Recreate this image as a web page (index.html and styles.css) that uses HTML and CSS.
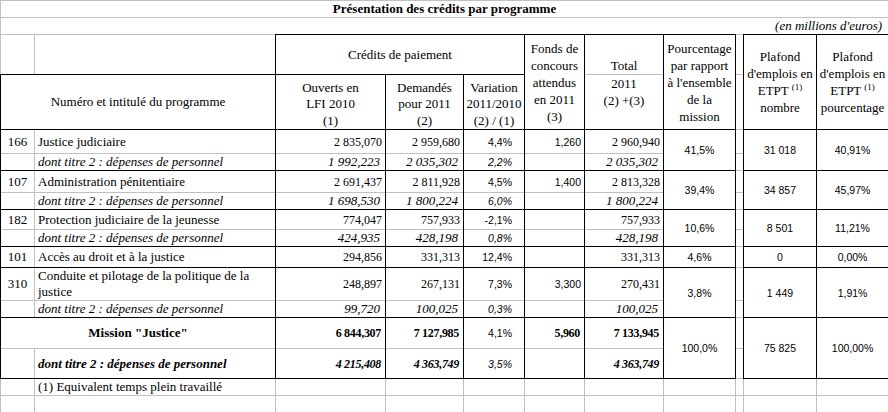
FILE: index.html
```html
<!DOCTYPE html>
<html lang="fr">
<head>
<meta charset="utf-8">
<title>Présentation des crédits par programme</title>
<link rel="stylesheet" href="styles.css">
</head>
<body>
<table class="sheet">
<colgroup>
<col class="c-a"><col class="c-b"><col class="c-c"><col class="c-d"><col class="c-e"><col class="c-f"><col class="c-g"><col class="c-h"><col class="c-i"><col class="c-j"><col class="c-k">
</colgroup>
<tr class="h17"><td colspan="11" class="title">Présentation des crédits par programme</td></tr>
<tr class="h17"><td colspan="11" class="unit">(en millions d'euros)</td></tr>
<tr class="h40">
 <td></td><td></td>
 <td colspan="3" class="k ctr">Crédits de paiement</td>
 <td rowspan="2" class="k ctr hd">Fonds de<br>concours<br>attendus<br>en 2011<br>(3)</td>
 <td class="kl kr kt ctr bot hd">Total</td>
 <td rowspan="2" class="k ctr hd">Pourcentage<br>par rapport<br>à l'ensemble<br>de la<br>mission</td>
 <td class="gap"></td>
 <td rowspan="2" class="k ctr hd">Plafond<br>d'emplois en<br>ETPT <sup>(1)</sup><br>nombre</td>
 <td rowspan="2" class="k ctr hd">Plafond<br>d'emplois en<br>ETPT <sup>(1)</sup><br>pourcentage</td>
</tr>
<tr class="h55">
 <td colspan="2" class="k ctr">Numéro et intitulé du programme</td>
 <td class="k ctr bot sub">Ouverts en<br>LFI 2010<br>(1)</td>
 <td class="k ctr bot sub">Demandés<br>pour 2011<br>(2)</td>
 <td class="k ctr bot sub">Variation<br>2011/2010<br>(2) / (1)</td>
 <td class="kl kr kb ctr top hd">2011<br>(2) +(3)</td>
 <td class="gap"></td>
</tr>

<tr class="h24">
 <td class="kl kt ctr">166</td>
 <td class="kt kr">Justice judiciaire</td>
 <td class="kl kr kt num">2 835,070</td>
 <td class="kl kr kt num">2 959,680</td>
 <td class="kl kr kt pct">4,4%</td>
 <td class="kl kr kt snum">1,260</td>
 <td class="kl kr kt num">2 960,940</td>
 <td rowspan="2" class="k ctr sans">41,5%</td>
 <td class="gap"></td>
 <td rowspan="2" class="k ctr sans">31 018</td>
 <td rowspan="2" class="k ctr sans">40,91%</td>
</tr>
<tr class="h17">
 <td class="kl kb"></td>
 <td class="kr kb it">dont titre 2 : dépenses de personnel</td>
 <td class="kl kr kb inum">1 992,223</td>
 <td class="kl kr kb inum">2 035,302</td>
 <td class="kl kr kb pct it">2,2%</td>
 <td class="kl kr kb"></td>
 <td class="kl kr kb inum">2 035,302</td>
 <td class="gap"></td>
</tr>

<tr class="h22">
 <td class="kl kt ctr">107</td>
 <td class="kt kr">Administration pénitentiaire</td>
 <td class="kl kr kt num">2 691,437</td>
 <td class="kl kr kt num">2 811,928</td>
 <td class="kl kr kt pct">4,5%</td>
 <td class="kl kr kt snum">1,400</td>
 <td class="kl kr kt num">2 813,328</td>
 <td rowspan="2" class="k ctr sans">39,4%</td>
 <td class="gap"></td>
 <td rowspan="2" class="k ctr sans">34 857</td>
 <td rowspan="2" class="k ctr sans">45,97%</td>
</tr>
<tr class="h17">
 <td class="kl kb"></td>
 <td class="kr kb it">dont titre 2 : dépenses de personnel</td>
 <td class="kl kr kb inum">1 698,530</td>
 <td class="kl kr kb inum">1 800,224</td>
 <td class="kl kr kb pct it">6,0%</td>
 <td class="kl kr kb"></td>
 <td class="kl kr kb inum">1 800,224</td>
 <td class="gap"></td>
</tr>

<tr class="h20">
 <td class="kl kt ctr">182</td>
 <td class="kt kr">Protection judiciaire de la jeunesse</td>
 <td class="kl kr kt num">774,047</td>
 <td class="kl kr kt num">757,933</td>
 <td class="kl kr kt pct">-2,1%</td>
 <td class="kl kr kt"></td>
 <td class="kl kr kt num">757,933</td>
 <td rowspan="2" class="k ctr sans">10,6%</td>
 <td class="gap"></td>
 <td rowspan="2" class="k ctr sans">8 501</td>
 <td rowspan="2" class="k ctr sans">11,21%</td>
</tr>
<tr class="h17">
 <td class="kl kb"></td>
 <td class="kr kb it">dont titre 2 : dépenses de personnel</td>
 <td class="kl kr kb inum">424,935</td>
 <td class="kl kr kb inum">428,198</td>
 <td class="kl kr kb pct it">0,8%</td>
 <td class="kl kr kb"></td>
 <td class="kl kr kb inum">428,198</td>
 <td class="gap"></td>
</tr>

<tr class="h21">
 <td class="kl kt kb ctr">101</td>
 <td class="kt kr kb">Accès au droit et à la justice</td>
 <td class="k num">294,856</td>
 <td class="k num">331,313</td>
 <td class="k pct">12,4%</td>
 <td class="k"></td>
 <td class="k num">331,313</td>
 <td class="k ctr sans">4,6%</td>
 <td class="gap"></td>
 <td class="k ctr sans">0</td>
 <td class="k ctr sans">0,00%</td>
</tr>

<tr class="h32">
 <td class="kl kt ctr">310</td>
 <td class="kt kr wrap">Conduite et pilotage de la politique de la<br>justice</td>
 <td class="kl kr kt num">248,897</td>
 <td class="kl kr kt num">267,131</td>
 <td class="kl kr kt pct">7,3%</td>
 <td class="kl kr kt snum">3,300</td>
 <td class="kl kr kt num">270,431</td>
 <td rowspan="2" class="k ctr sans">3,8%</td>
 <td class="gap"></td>
 <td rowspan="2" class="k ctr sans">1 449</td>
 <td rowspan="2" class="k ctr sans">1,91%</td>
</tr>
<tr class="h17">
 <td class="kl kb"></td>
 <td class="kr kb it">dont titre 2 : dépenses de personnel</td>
 <td class="kl kr kb inum">99,720</td>
 <td class="kl kr kb inum">100,025</td>
 <td class="kl kr kb pct it">0,3%</td>
 <td class="kl kr kb"></td>
 <td class="kl kr kb inum">100,025</td>
 <td class="gap"></td>
</tr>

<tr class="h31">
 <td colspan="2" class="kl kt kr ctr strong">Mission "Justice"</td>
 <td class="kl kr kt bnum">6 844,307</td>
 <td class="kl kr kt bnum">7 127,985</td>
 <td class="kl kr kt pct">4,1%</td>
 <td class="kl kr kt bnum">5,960</td>
 <td class="kl kr kt bnum">7 133,945</td>
 <td rowspan="2" class="k ctr sans">100,0%</td>
 <td class="gap"></td>
 <td rowspan="2" class="k ctr sans">75 825</td>
 <td rowspan="2" class="k ctr sans">100,00%</td>
</tr>
<tr class="h30">
 <td class="kl kb"></td>
 <td class="kr kb strong it">dont titre 2 : dépenses de personnel</td>
 <td class="kl kr kb bnum it">4 215,408</td>
 <td class="kl kr kb bnum it">4 363,749</td>
 <td class="kl kr kb pct it">3,5%</td>
 <td class="kl kr kb"></td>
 <td class="kl kr kb bnum it">4 363,749</td>
 <td class="gap"></td>
</tr>

<tr class="h17">
 <td></td><td>(1) Equivalent temps plein travaillé</td><td></td><td></td><td></td><td></td><td></td><td></td><td class="gap"></td><td></td><td></td>
</tr>
<tr class="h17">
 <td></td><td></td><td></td><td></td><td></td><td></td><td></td><td></td><td class="gap"></td><td></td><td></td>
</tr>
</table>
</body>
</html>
```

FILE: styles.css
```css
html, body {
  margin: 0;
  padding: 0;
  background: #ffffff;
}

body {
  width: 888px;
  height: 412px;
  overflow: hidden;
}

.sheet {
  border-collapse: collapse;
  table-layout: fixed;
  width: 888px;
  font-family: "Liberation Serif", "Times New Roman", serif;
  font-size: 13px;
  color: #000;
}

.c-a { width: 34px; }
.c-b { width: 241px; }
.c-c { width: 110px; }
.c-d { width: 78px; }
.c-e { width: 61px; }
.c-f { width: 60px; }
.c-g { width: 79px; }
.c-h { width: 72px; }
.c-i { width: 8px; }
.c-j { width: 73px; }
.c-k { width: 72px; }

.h17 { height: 17px; }
.h20 { height: 20px; }
.h21 { height: 21px; }
.h22 { height: 22px; }
.h24 { height: 24px; }
.h30 { height: 30px; }
.h31 { height: 31px; }
.h32 { height: 32px; }
.h40 { height: 40px; }
.h55 { height: 55px; }

.sheet td {
  border: 1px solid #c0c0c0;
  padding: 0 3px;
  white-space: nowrap;
  overflow: hidden;
  line-height: 16px;
  vertical-align: middle;
  text-align: left;
}

/* black cell borders: "double" at 1px paints as a solid line and wins border conflicts */
.sheet .k { border: 1px double #000; }
.sheet .kt { border-top: 1px double #000; }
.sheet .kb { border-bottom: 1px double #000; }
.sheet .kl { border-left: 1px double #000; }
.sheet .kr { border-right: 1px double #000; }

.sheet .gap { padding: 0; }

.sheet .title {
  font-weight: bold;
  text-align: center;
  padding: 0;
}

.sheet .unit {
  font-style: italic;
  text-align: right;
  padding-right: 6px;
}

.sheet .ctr { text-align: center; }
.sheet .bot { vertical-align: bottom; }
.sheet .top { vertical-align: top; }

.sheet .hd {
  line-height: 17px;
  padding: 0 1px;
}

.sheet .sub {
  line-height: 16.5px;
  padding: 0 1px;
}

.sheet .wrap { line-height: 16px; }

.sheet .it { font-style: italic; }
.sheet .strong { font-weight: bold; }

.sheet .num {
  text-align: right;
  font-size: 12px;
  padding-right: 3px;
}

.sheet .inum {
  text-align: right;
  font-style: italic;
  padding-right: 5px;
}

.sheet .bnum {
  text-align: right;
  font-weight: bold;
  font-size: 12px;
  letter-spacing: -0.3px;
  padding-right: 4px;
}

.sheet .pct {
  text-align: right;
  font-family: "Liberation Sans", Arial, sans-serif;
  font-size: 10.5px;
  padding-right: 12px;
}

.sheet .snum {
  text-align: right;
  font-family: "Liberation Sans", Arial, sans-serif;
  font-size: 10.5px;
  padding-right: 3px;
}

.sheet .sans {
  font-family: "Liberation Sans", Arial, sans-serif;
  font-size: 10.5px;
}

sup {
  font-size: 9px;
  line-height: 0;
  vertical-align: 5px;
}
```
